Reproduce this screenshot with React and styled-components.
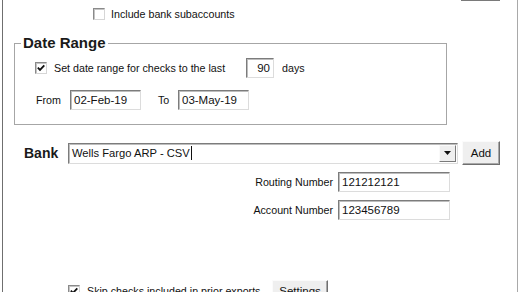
import React from 'react';
import styled, { createGlobalStyle } from 'styled-components';

const GlobalStyle = createGlobalStyle`
  html, body {
    margin: 0;
    padding: 0;
    background: #ffffff;
  }
  body {
    font-family: "Liberation Sans", Arial, sans-serif;
    font-size: 10.7px;
    color: #111;
  }
`;

const Window = styled.div`
  box-sizing: border-box;
  width: 516px;
  height: 292px;
  margin-left: 2px;
  border-left: 1px solid #6f6f6f;
  border-right: 1px solid #a9a9a9;
  overflow: hidden;
  display: flex;
  flex-direction: column;
  background: #fff;
`;

const TopStub = styled.div`
  align-self: flex-end;
  box-sizing: border-box;
  width: 39px;
  height: 3px;
  margin-right: 17px;
  background: #ececec;
  border-bottom: 1px solid #7a7a7a;
  border-right: 1px solid #7a7a7a;
`;

const CheckRow = styled.label`
  display: flex;
  align-items: center;
  gap: ${p => p.$gap || 6}px;
  padding-left: ${p => p.$indent}px;
  margin-top: ${p => p.$mt || 0}px;
  height: ${p => p.$h || 12}px;
  white-space: nowrap;
`;

const Box = styled.span`
  box-sizing: border-box;
  flex: none;
  width: 12px;
  height: 12px;
  background: #fff;
  border: 1px solid;
  border-color: #8a8a8a #d6d6d6 #d6d6d6 #8a8a8a;
  box-shadow: inset 1px 1px 0 #c4c4c4;
  display: flex;
  align-items: center;
  justify-content: center;
`;

const Check = ({ checked }) => (
  <Box>
    {checked && (
      <svg width="8" height="8" viewBox="0 0 8 8">
        <path d="M0.8 3.6 L3 5.9 L7.3 1.4" fill="none" stroke="#111" strokeWidth="1.8" />
      </svg>
    )}
  </Box>
);

const GroupBox = styled.fieldset`
  box-sizing: border-box;
  width: 433px;
  margin: 15px 0 0 11px;
  padding: 7px 0 14px 0;
  border: 1px solid #a6a6a6;
  display: flex;
  flex-direction: column;
  gap: 12px;
  min-inline-size: 0;
`;

const Legend = styled.legend`
  margin-left: 6px;
  padding: 0 2px;
  font-size: 15px;
  line-height: 16px;
  font-weight: bold;
  color: #1a1a1a;
`;

const FieldRow = styled.div`
  display: flex;
  align-items: center;
  height: 20px;
  padding-left: ${p => p.$indent}px;
  margin-top: ${p => p.$mt || 0}px;
  white-space: nowrap;
`;

const Text = styled.span`
  flex: none;
  width: ${p => (p.$w ? `${p.$w}px` : 'auto')};
  margin-left: ${p => p.$ml || 0}px;
  text-align: ${p => p.$align || 'left'};
  padding-right: ${p => p.$pr || 0}px;
  box-sizing: border-box;
`;

const TextField = styled.div`
  box-sizing: border-box;
  flex: none;
  width: ${p => p.$w}px;
  height: ${p => p.$h || 20}px;
  margin-left: ${p => p.$ml || 0}px;
  background: #fff;
  border: 1px solid;
  border-color: #7c7c7c #dcdcdc #dcdcdc #7c7c7c;
  box-shadow: inset 1px 1px 0 #bdbdbd;
  padding: 0 3px;
  display: flex;
  align-items: center;
  justify-content: ${p => (p.$right ? 'flex-end' : 'flex-start')};
  font-size: 11.5px;
  color: #111;
`;

const BankRow = styled.div`
  display: flex;
  align-items: center;
  height: 24px;
  margin-top: 16px;
  padding-left: 21px;
  gap: 4px;
`;

const BankLabel = styled.span`
  width: 40px;
  font-size: 14px;
  font-weight: bold;
  color: #1a1a1a;
`;

const Combo = styled.div`
  box-sizing: border-box;
  width: 390px;
  height: 21px;
  background: #fff;
  border: 1px solid;
  border-color: #7c7c7c #dcdcdc #dcdcdc #7c7c7c;
  box-shadow: inset 1px 1px 0 #bdbdbd;
  display: flex;
  align-items: center;
  padding-left: 3px;
  font-size: 11.2px;
`;

const Caret = styled.span`
  width: 1px;
  height: 14px;
  background: #111;
  margin-left: 1px;
`;

const DropButton = styled.span`
  box-sizing: border-box;
  margin-left: auto;
  margin-right: 1px;
  width: 17px;
  height: 17px;
  background: #efefef;
  border: 1px solid;
  border-color: #fafafa #7a7a7a #7a7a7a #fafafa;
  display: flex;
  align-items: center;
  justify-content: center;
`;

const Button = styled.button`
  box-sizing: border-box;
  flex: none;
  width: ${p => p.$w}px;
  height: ${p => p.$h}px;
  margin-left: ${p => p.$ml || 0}px;
  padding: 0;
  background: #efefef;
  border: 1px solid;
  border-color: #fbfbfb #6f6f6f #6f6f6f #fbfbfb;
  box-shadow: inset -1px -1px 0 #a8a8a8;
  font-family: "Liberation Sans", Arial, sans-serif;
  font-size: 11.5px;
  color: #111;
`;

export default function App() {
  return (
    <>
      <GlobalStyle />
      <Window>
        <TopStub />
        <CheckRow $indent={90} $mt={7}>
          <Check />
          <span>Include bank subaccounts</span>
        </CheckRow>

        <GroupBox>
          <Legend>Date Range</Legend>
          <FieldRow $indent={20}>
            <Check checked />
            <Text $w={192} $ml={7}>Set date range for checks to the last</Text>
            <TextField $w={28} $right>90</TextField>
            <Text $ml={8}>days</Text>
          </FieldRow>
          <FieldRow $indent={21}>
            <Text $w={34}>From</Text>
            <TextField $w={71}>02-Feb-19</TextField>
            <Text $w={20} $ml={17}>To</Text>
            <TextField $w={71}>03-May-19</TextField>
          </FieldRow>
        </GroupBox>

        <BankRow>
          <BankLabel>Bank</BankLabel>
          <Combo>
            Wells Fargo ARP - CSV<Caret />
            <DropButton>
              <svg width="7" height="4" viewBox="0 0 7 4">
                <path d="M0 0 H7 L3.5 4 Z" fill="#111" />
              </svg>
            </DropButton>
          </Combo>
          <Button $w={38} $h={24}>Add</Button>
        </BankRow>

        <FieldRow $mt={7}>
          <Text $w={335} $align="right" $pr={5}>Routing Number</Text>
          <TextField $w={112}>121212121</TextField>
        </FieldRow>
        <FieldRow $mt={8}>
          <Text $w={335} $align="right" $pr={5}>Account Number</Text>
          <TextField $w={112}>123456789</TextField>
        </FieldRow>

        <FieldRow $indent={65} $mt={61}>
          <Check checked />
          <Text $w={185} $ml={7}>Skip checks included in prior exports</Text>
          <Button $w={56} $h={22}>Settings</Button>
        </FieldRow>
      </Window>
    </>
  );
}
